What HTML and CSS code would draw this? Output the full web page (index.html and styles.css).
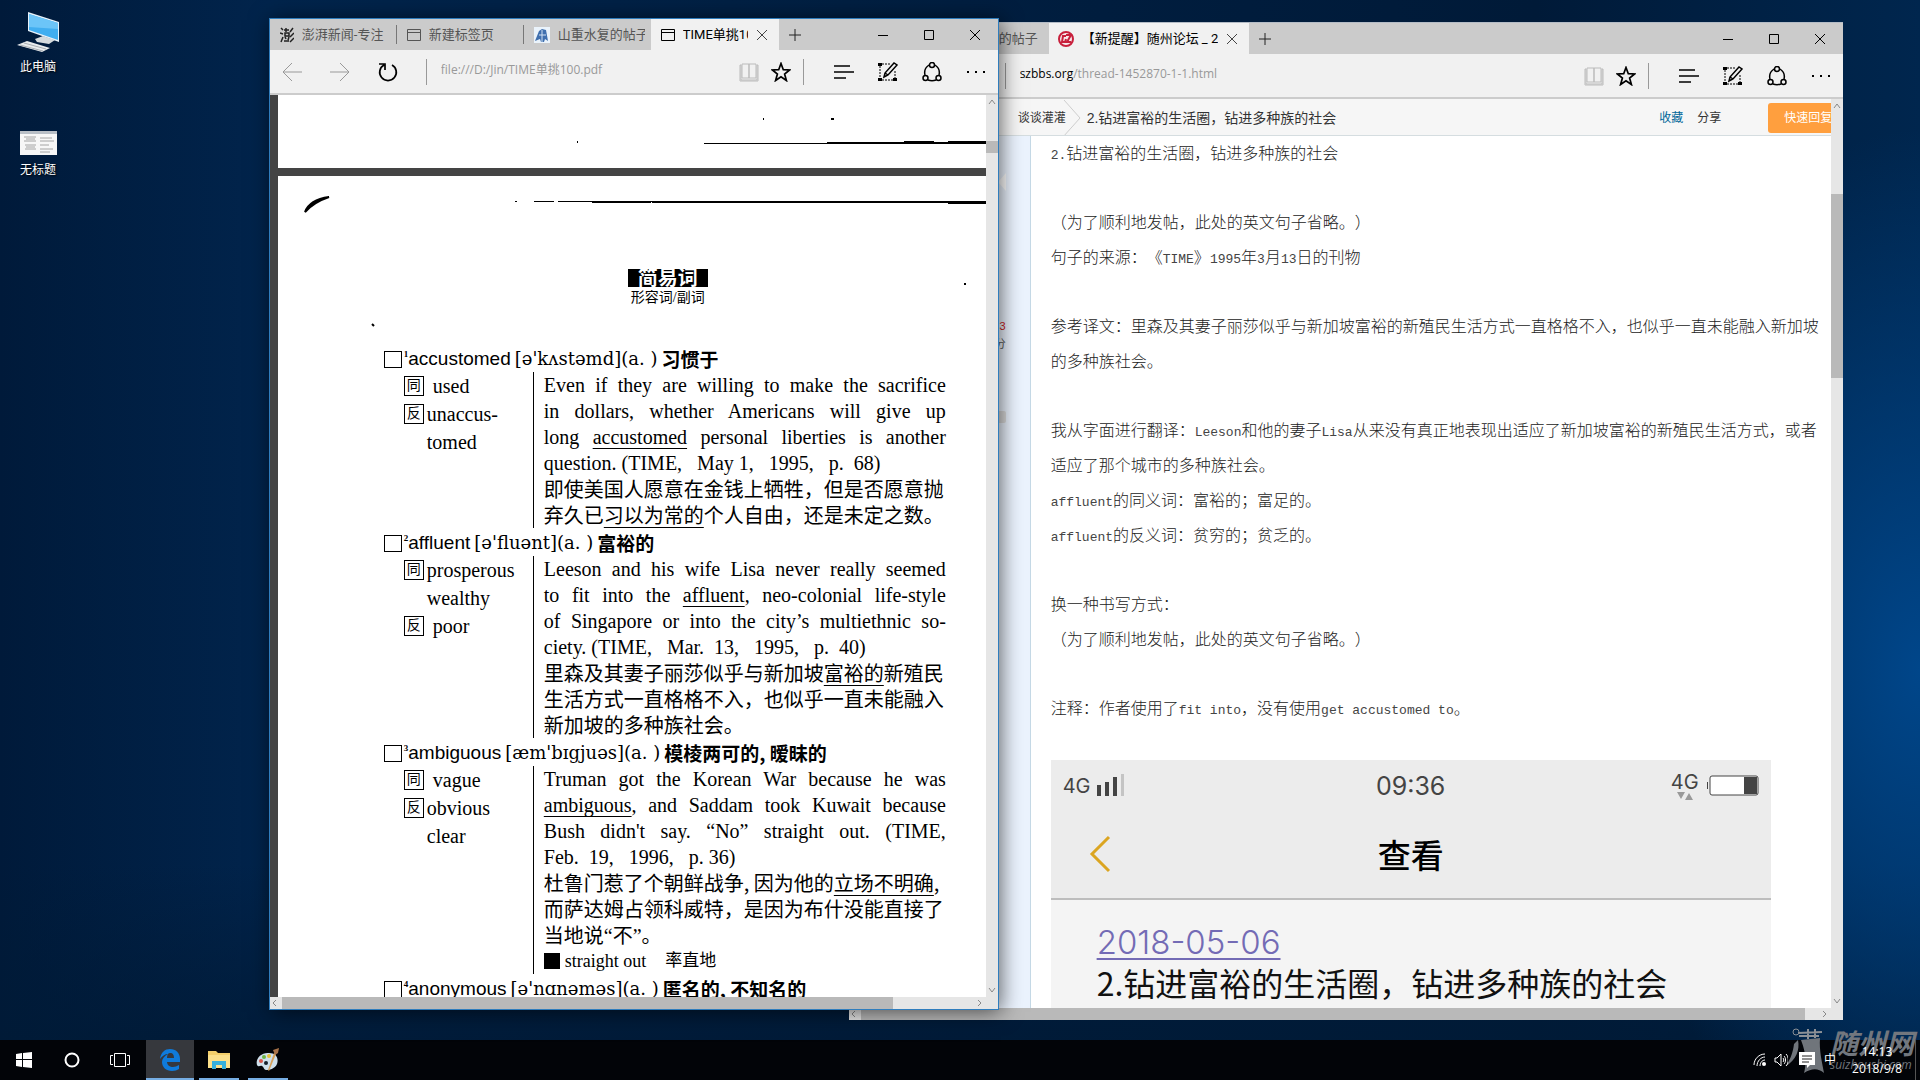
FILE: index.html
```html
<!DOCTYPE html>
<html lang="zh-CN">
<head>
<meta charset="utf-8">
<title>桌面</title>
<link rel="stylesheet" href="styles.css">
</head>
<body>
<svg class="sprite" aria-hidden="true">
  <symbol id="i-back" viewBox="0 0 20 20"><path d="M20 10H1M10 1 1 10l9 9"/></symbol>
  <symbol id="i-fwd" viewBox="0 0 20 20"><path d="M0 10h19M10 1l9 9-9 9"/></symbol>
  <symbol id="i-refresh" viewBox="0 0 20 20"><path d="M6 3a8.3 8.3 0 1 0 8 0M1 2h6v6" stroke-width="1.7"/></symbol>
  <symbol id="i-book" viewBox="0 0 20 20"><path d="M1 3h1v15h16V3h1v16H1zM3 2h7v14H3zM10 2h7v14h-7z"/></symbol>
  <symbol id="i-star" viewBox="0 0 20 20"><path d="m10 1.500 2.300 6.200 6.300.3-5 4 1.800 6.500-5.400-3.800-5.400 3.800 1.800-6.500-5-4 6.300-.3z" stroke-width="1.700"/></symbol>
  <symbol id="i-hub" viewBox="0 0 20 20"><path d="M0 4h16M0 10h20M0 16h12" stroke-width="1.500"/></symbol>
  <symbol id="i-note" viewBox="0 0 20 20"><path d="M2 4v13M17 9v8M4 2h8M4 18h12" stroke-dasharray="2 1"/><path d="M0 1h4v3H0zM0 16h4v3H0zM15 16h4v3h-4z" fill="currentColor" stroke="none"/><path d="m6 15 1-4L16 1l3 2-9 10zM7 11l3 2" stroke-width="1.500"/></symbol>
  <symbol id="i-share" viewBox="0 0 20 20"><path d="M7 3C4 5 2 9 3 13M13 3c3 2 5 6 4 10M6 18c3 1 5 1 8 0" stroke-width="1.500"/><circle cx="10" cy="3" r="2.500" stroke-width="1.500"/><circle cx="3.500" cy="16" r="2.500" stroke-width="1.500"/><circle cx="16.500" cy="16" r="2.500" stroke-width="1.500"/></symbol>
  <symbol id="i-more" viewBox="0 0 20 20"><path d="M1 9h2v2H1zM9 9h2v2H9zM17 9h2v2h-2z" fill="currentColor" stroke="none"/></symbol>
  <symbol id="i-page" viewBox="0 0 14 14"><path d="M.5 1.500h13v11H.5zM.5 4.500h13"/></symbol>
  <symbol id="i-x" viewBox="0 0 12 12"><path d="m1 1 10 10M11 1 1 11"/></symbol>
  <symbol id="i-plus" viewBox="0 0 12 12"><path d="M6 0v12M0 6h12"/></symbol>
  <symbol id="i-min" viewBox="0 0 12 12"><path d="M1 6.500h10"/></symbol>
  <symbol id="i-max" viewBox="0 0 12 12"><path d="M1.500 1.500h9v9h-9z"/></symbol>
  <symbol id="i-up" viewBox="0 0 10 10"><path d="m2 7 3-4 3 4"/></symbol>
  <symbol id="i-down" viewBox="0 0 10 10"><path d="m2 3 3 4 3-4"/></symbol>
  <symbol id="i-left" viewBox="0 0 10 10"><path d="M6 2 3 5l3 3"/></symbol>
  <symbol id="i-right" viewBox="0 0 10 10"><path d="m4 2 3 3-3 3"/></symbol>
</svg>

<main class="desktop">
  <nav class="shortcuts" aria-label="桌面图标">
    <a class="shortcut" href="#pc">
      <svg width="44" height="40" viewBox="0 0 44 40"><path d="m12 0 31 10v20L12 19z" fill="#e8f2fa"/><path d="m13 2 29 9v17L13 18z" fill="#41aef0"/><path d="m13 2 29 9v6L13 15z" fill="#6cc5f8"/><path d="m19 27 8-3 12 4-6 4-12-2z" fill="#d5dadd"/><path d="m1 33 10-4 23 7-8 4z" fill="#e9ecee"/><path d="m4 33 23 6M8 31l22 6" stroke="#a8adb2"/></svg>
      <span>此电脑</span>
    </a>
    <a class="shortcut" href="#untitled">
      <svg width="37" height="24" viewBox="0 0 37 24"><path d="M0 0h37v24H0z" fill="#f7f7f7"/><path d="M0 0h37v3H0z" fill="#b9bfc6"/><path d="M4 6h12M6 8h9M4 10h12M5 14h11M6 16h9M5 18h11M20 7h12M20 10h14M20 14h9M20 18h13M20 21h10" stroke="#a4a4a4"/></svg>
      <span>无标题</span>
    </a>
  </nav>

  <section class="window window-web">
    <header class="titlebar">
      <button class="tab tab-covered"><span class="tab-text">山重水复的帖子</span></button>
      <div class="tab tab-active tab-wide">
        <svg width="16" height="18" viewBox="0 0 16 18"><circle cx="8" cy="9" r="7" fill="#f7e9ec" stroke="#c8203c" stroke-width="2"/><path d="M8 6H5l-1 6h3l1-3M8 5h5l-4 7h4" stroke="#c8203c" stroke-width="2" fill="none"/></svg>
        <span class="tab-text">【新提醒】随州论坛 _ 2</span>
        <button class="tab-close" aria-label="关闭标签页"><svg class="ic ic-12"><use href="#i-x"/></svg></button>
      </div>
      <button class="tab-add" aria-label="新建标签页"><svg class="ic ic-12"><use href="#i-plus"/></svg></button>
      <div class="controls">
        <button aria-label="最小化"><svg class="ic ic-12"><use href="#i-min"/></svg></button>
        <button aria-label="最大化"><svg class="ic ic-12"><use href="#i-max"/></svg></button>
        <button aria-label="关闭"><svg class="ic ic-12"><use href="#i-x"/></svg></button>
      </div>
    </header>
    <div class="toolbar">
      <button class="nav dim" aria-label="后退"><svg class="ic ic-20"><use href="#i-back"/></svg></button>
      <button class="nav dim" aria-label="前进"><svg class="ic ic-20"><use href="#i-fwd"/></svg></button>
      <button class="nav" aria-label="刷新"><svg class="ic ic-20"><use href="#i-refresh"/></svg></button>
      <i class="rule rule-url"></i>
      <div class="url"><b>szbbs.org</b>/thread-1452870-1-1.html</div>
      <button class="small faint" aria-label="阅读视图"><svg class="ic ic-20"><use href="#i-book"/></svg></button>
      <button class="small" aria-label="收藏"><svg class="ic ic-20"><use href="#i-star"/></svg></button>
      <i class="rule rule-tools"></i>
      <button class="tool" aria-label="中心"><svg class="ic ic-20"><use href="#i-hub"/></svg></button>
      <button class="tool" aria-label="做笔记"><svg class="ic ic-20"><use href="#i-note"/></svg></button>
      <button class="tool" aria-label="共享"><svg class="ic ic-20"><use href="#i-share"/></svg></button>
      <button class="tool" aria-label="更多"><svg class="ic ic-20"><use href="#i-more"/></svg></button>
    </div>
    <div class="viewport">
      <div class="forum">
        <nav class="crumbs">
          <a class="crumb-board" href="#board">谈谈灌灌</a>
          <svg class="crumb-arrow" width="20" height="37" viewBox="0 0 20 37"><path d="M1 0 17 18 0 37" fill="none" stroke="#cdcdcd"/></svg>
          <a class="crumb-topic" href="#topic">2.钻进富裕的生活圈，钻进多种族的社会</a>
          <a class="crumb-fav" href="#fav">收藏</a>
          <a class="crumb-share" href="#share">分享</a>
          <button class="reply">快速回复</button>
        </nav>
        <div class="post">
          <aside class="author">
            <svg width="8" height="18" viewBox="0 0 8 18"><path d="M8 0v18L0 9z" fill="#fff"/></svg>
            <span class="count">3</span><span class="label">分</span>
            <i class="badge"></i>
          </aside>
          <article class="body">
            <p><span class="en">2.</span>钻进富裕的生活圈，钻进多种族的社会</p>
            <p>（为了顺利地发帖，此处的英文句子省略。）<br>句子的来源：《<span class="en">TIME</span>》<span class="en">1995</span>年<span class="en">3</span>月<span class="en">13</span>日的刊物</p>
            <p>参考译文：里森及其妻子丽莎似乎与新加坡富裕的新殖民生活方式一直格格不入，也似乎一直未能融入新加坡的多种族社会。</p>
            <p>我从字面进行翻译：<span class="en">Leeson</span>和他的妻子<span class="en">Lisa</span>从来没有真正地表现出适应了新加坡富裕的新殖民生活方式，或者适应了那个城市的多种族社会。<br><span class="en">affluent</span>的同义词：富裕的；富足的。<br><span class="en">affluent</span>的反义词：贫穷的；贫乏的。</p>
            <p>换一种书写方式：<br>（为了顺利地发帖，此处的英文句子省略。）</p>
            <p>注释：作者使用了<span class="en">fit into</span>，没有使用<span class="en">get accustomed to</span>。</p>
            <section class="phone">
              <header class="phone-head">
                <div class="phone-status">
                  <span class="net">4G<svg width="30" height="24" viewBox="0 0 30 24"><path d="M1 11h4v11H1zM9 8h4v14H9zM17 3h4v19h-4z" fill="#444"/><path d="M25 0h3v22h-3z" fill="#c4c4c4"/></svg></span>
                  <time class="clock-big">09:36</time>
                  <span class="net net-right"><span class="data">4G<svg width="20" height="8" viewBox="0 0 20 8"><path d="M2 0h8L6 7zM10 8h8l-4-7z" fill="#999"/></svg></span><svg width="52" height="22" viewBox="0 0 52 22"><rect x="3" y="1" width="48" height="19" rx="2" fill="#fff" stroke="#444"/><path d="M37 2h13v17H37zM0 7h1v7H0z" fill="#444"/></svg></span>
                </div>
                <div class="phone-nav">
                  <svg width="22" height="38" viewBox="0 0 22 38"><path d="M20 2 3 19l17 17" fill="none" stroke="#dba521" stroke-width="3"/></svg>
                  <h2>查看</h2>
                </div>
              </header>
              <div class="phone-note">
                <a href="#date">2018-05-06</a>
                <p>2.钻进富裕的生活圈，钻进多种族的社会</p>
              </div>
            </section>
          </article>
        </div>
      </div>
      <div class="vbar"><svg class="ic ic-10"><use href="#i-up"/></svg><i class="thumb-v thumb-web"></i><svg class="ic ic-10 end"><use href="#i-down"/></svg></div>
    </div>
    <div class="hbar"><svg class="ic ic-10"><use href="#i-left"/></svg><i class="thumb-h thumb-h-web"></i><svg class="ic ic-10 end"><use href="#i-right"/></svg></div>
  </section>

  <section class="window window-pdf">
    <header class="titlebar">
      <button class="tab">
        <svg width="14" height="16" viewBox="0 0 14 16"><path d="m1 1 2 2M0 6l3 1M1 15l2-5M6 1v4M4 3h5M5 6h4v3H5zM5 10l1 2M9 10l-1 3M4 14h5M13 1l-3 4M14 6l-4 4M14 11l-4 4" stroke="#222" stroke-width="1.500" fill="none"/></svg>
        <span class="tab-text">澎湃新闻-专注</span>
      </button>
      <button class="tab"><svg class="ic ic-14"><use href="#i-page"/></svg><span class="tab-text">新建标签页</span></button>
      <button class="tab tab-tight">
        <svg width="16" height="16" viewBox="0 0 16 16"><path d="M0 0h16v16H0z" fill="#eaf3fb"/><path d="m1 14 4-10 3-2 4 1 2 11-3-2-1 3H7l-1-3z" fill="#3f6fae"/><path d="M8 3v12M5 8h7" stroke="#cfe0f2"/></svg>
        <span class="tab-text">山重水复的帖子</span>
      </button>
      <div class="tab tab-active"><svg class="ic ic-14"><use href="#i-page"/></svg><span class="tab-text">TIME单挑100</span>
        <button class="tab-close" aria-label="关闭标签页"><svg class="ic ic-12"><use href="#i-x"/></svg></button></div>
      <button class="tab-add" aria-label="新建标签页"><svg class="ic ic-12"><use href="#i-plus"/></svg></button>
      <div class="controls">
        <button aria-label="最小化"><svg class="ic ic-12"><use href="#i-min"/></svg></button>
        <button aria-label="最大化"><svg class="ic ic-12"><use href="#i-max"/></svg></button>
        <button aria-label="关闭"><svg class="ic ic-12"><use href="#i-x"/></svg></button>
      </div>
    </header>
    <div class="toolbar">
      <button class="nav dim" aria-label="后退"><svg class="ic ic-20"><use href="#i-back"/></svg></button>
      <button class="nav dim" aria-label="前进"><svg class="ic ic-20"><use href="#i-fwd"/></svg></button>
      <button class="nav" aria-label="刷新"><svg class="ic ic-20"><use href="#i-refresh"/></svg></button>
      <i class="rule rule-url"></i>
      <div class="url">file:///D:/Jin/TIME单挑100.pdf</div>
      <button class="small faint" aria-label="阅读视图"><svg class="ic ic-20"><use href="#i-book"/></svg></button>
      <button class="small" aria-label="收藏"><svg class="ic ic-20"><use href="#i-star"/></svg></button>
      <i class="rule rule-tools"></i>
      <button class="tool" aria-label="中心"><svg class="ic ic-20"><use href="#i-hub"/></svg></button>
      <button class="tool" aria-label="做笔记"><svg class="ic ic-20"><use href="#i-note"/></svg></button>
      <button class="tool" aria-label="共享"><svg class="ic ic-20"><use href="#i-share"/></svg></button>
      <button class="tool" aria-label="更多"><svg class="ic ic-20"><use href="#i-more"/></svg></button>
    </div>
    <div class="viewport">
      <div class="reader">
        <div class="sheet sheet-end"><svg width="710" height="73" viewBox="0 0 710 73"><path d="M426 48.500h284" stroke="#000" stroke-width="1"/><path d="M549 48h161M626 47h30M670 47h40" stroke="#000" stroke-width="2"/><path d="M485 24h1M553 24h3M299 47h1" stroke="#000" stroke-width="2"/></svg></div>
        <article class="sheet sheet-main">
          <svg class="scan" width="710" height="220" viewBox="0 0 710 220"><path d="M27 36c3-8 10-13 24-15-9 3-17 7-24 15z" stroke="#000" stroke-width="2"/><path d="M237 25.500h2M256 25.500h20M280 25.500h430" stroke="#000"/><path d="M314 26h59M374 26h336M670 27h40" stroke="#000" stroke-width="2"/><path d="M94 148l2 2M686 108h2" stroke="#000" stroke-width="2"/></svg>
          <header class="lesson"><h1>简易词</h1><p>形容词/副词</p></header>

          <section class="entry">
            <h2><label><input type="checkbox"><sup>1</sup>accustomed</label><span class="ipa">[ə'kʌstəmd](a. )</span><b>习惯于</b></h2>
            <div class="detail">
              <ul>
                <li><mark>同</mark><span class="single">used</span></li>
                <li><mark>反</mark>unaccus-</li>
                <li class="cont">tomed</li>
              </ul>
              <div class="quote">
                <p class="full">Even if they are willing to make the sacrifice</p>
                <p class="full">in dollars, whether Americans will give up</p>
                <p class="full">long <u>accustomed</u> personal liberties is another</p>
                <p>question. (TIME,&nbsp;&nbsp; May 1,&nbsp;&nbsp; 1995,&nbsp;&nbsp; p.&nbsp; 68)</p>
                <p class="zh">即使美国人愿意在金钱上牺牲，但是否愿意抛</p>
                <p class="zh">弃久已<u>习以为常的</u>个人自由，还是未定之数。</p>
              </div>
            </div>
          </section>

          <section class="entry">
            <h2><label><input type="checkbox"><sup>2</sup>affluent</label><span class="ipa">[ə'fluənt](a. )</span><b>富裕的</b></h2>
            <div class="detail">
              <ul>
                <li><mark>同</mark>prosperous</li>
                <li class="cont">wealthy</li>
                <li><mark>反</mark><span class="single">poor</span></li>
              </ul>
              <div class="quote">
                <p class="full">Leeson and his wife Lisa never really seemed</p>
                <p class="full">to fit into the <u>affluent</u>, neo-colonial life-style</p>
                <p class="full">of Singapore or into the city’s multiethnic so-</p>
                <p>ciety. (TIME,&nbsp;&nbsp; Mar.&nbsp; 13,&nbsp;&nbsp; 1995,&nbsp;&nbsp; p.&nbsp; 40)</p>
                <p class="zh">里森及其妻子丽莎似乎与新加坡<u>富裕的</u>新殖民</p>
                <p class="zh">生活方式一直格格不入，也似乎一直未能融入</p>
                <p class="zh">新加坡的多种族社会。</p>
              </div>
            </div>
          </section>

          <section class="entry">
            <h2><label><input type="checkbox"><sup>3</sup>ambiguous</label><span class="ipa">[æm'bɪgjuəs](a. )</span><b>模棱两可的, 暧昧的</b></h2>
            <div class="detail">
              <ul>
                <li><mark>同</mark><span class="single">vague</span></li>
                <li><mark>反</mark>obvious</li>
                <li class="cont">clear</li>
              </ul>
              <div class="quote">
                <p class="full">Truman got the Korean War because he was</p>
                <p class="full"><u>ambiguous</u>, and Saddam took Kuwait because</p>
                <p class="full">Bush didn't say. “No” straight out. (TIME,</p>
                <p>Feb.&nbsp; 19,&nbsp;&nbsp; 1996,&nbsp;&nbsp; p. 36)</p>
                <p class="zh">杜鲁门惹了个朝鲜战争, 因为他的<u>立场不明确</u>,</p>
                <p class="zh">而萨达姆占领科威特，是因为布什没能直接了</p>
                <p class="zh">当地说<span class="q">“</span>不<span class="q">”</span>。</p>
                <p class="idiom"><i></i>straight out<span>率直地</span></p>
              </div>
            </div>
          </section>

          <section class="entry">
            <h2><label><input type="checkbox"><sup>4</sup>anonymous</label><span class="ipa">[ə'nɑnəməs](a. )</span><b>匿名的, 不知名的</b></h2>
          </section>
        </article>
      </div>
      <div class="vbar"><svg class="ic ic-10"><use href="#i-up"/></svg><i class="thumb-v thumb-pdf"></i><svg class="ic ic-10 end"><use href="#i-down"/></svg></div>
    </div>
    <div class="hbar"><svg class="ic ic-10"><use href="#i-left"/></svg><i class="thumb-h thumb-h-pdf"></i><svg class="ic ic-10 end"><use href="#i-right"/></svg></div>
  </section>
</main>

<footer class="taskbar">
  <div class="apps">
    <button aria-label="开始"><svg width="16" height="16" viewBox="0 0 16 16"><path d="m0 2 6-1v6H0zM7 1l9-1v7H7zM0 8h6v7l-6-1zM7 8h9v8l-9-1z" fill="#fff"/></svg></button>
    <button aria-label="Cortana"><svg width="16" height="16" viewBox="0 0 16 16"><circle cx="8" cy="8" r="6.500" fill="none" stroke="#fff" stroke-width="2"/></svg></button>
    <button aria-label="任务视图"><svg width="20" height="16" viewBox="0 0 20 16"><path d="M4.500 1.500h11v13h-11zM3 3.500H.5v9H3M17 3.500h2.500v9H17" fill="none" stroke="#fff"/></svg></button>
  </div>
  <div class="apps apps-open">
    <button class="current" aria-label="Microsoft Edge"><svg width="20" height="22" viewBox="0 0 20 22"><path d="M0 10C1 3 5 0 10 0c6 0 10 4 10 10v3H7c0 3 3 5 6 5 2 0 4-1 6-2v4c-2 1-4 2-7 2-6 0-10-4-10-9 0-3 2-6 6-8-3 0-6 2-8 5zm7-1h7c0-3-1-5-4-5-2 0-3 2-3 5z" fill="#0f7bdb"/></svg></button>
    <button aria-label="文件资源管理器"><svg width="22" height="20" viewBox="0 0 22 20"><path d="M0 1h8l2 2h12v15H0z" fill="#f3cf6b"/><path d="M0 5h22v13H0z" fill="#fbe08b"/><path d="M4 11h14v8h-4v-4H8v4H4z" fill="#35b0dd"/></svg></button>
    <button aria-label="画图"><svg width="24" height="24" viewBox="0 0 24 24"><path d="M1 17c-2-7 5-13 12-12 7 0 10 5 8 11-2 5-8 6-11 6-2 0-2-3-4-4s-3 2-5-1z" fill="#cfe0ec"/><circle cx="5" cy="13" r="2" fill="#d9564a"/><circle cx="8" cy="9" r="2" fill="#6eb544"/><circle cx="13" cy="8" r="2" fill="#e7c13a"/><circle cx="10" cy="15" r="2" fill="#14202b"/><path d="m18 5 2 1-7 17-1-1z" fill="#d8a15a"/><path d="m17 2 6-2-1 5-3 2z" fill="#a87248"/></svg></button>
  </div>
  <div class="tray">
    <svg class="tray-wifi" width="13" height="14" viewBox="0 0 13 14"><path d="M1 12C1 6 6 1 12 1M4 13c0-5 4-9 8-9M7 13c0-3 2-6 5-6" fill="none" stroke="#fff"/><circle cx="11" cy="11" r="2" fill="#fff"/></svg>
    <svg class="tray-vol" width="14" height="14" viewBox="0 0 14 14"><path d="M1 5h2l4-4v12L3 9H1zM9 5c1 1 1 3 0 4M10 3c2 2 2 6 0 8M12 1c3 3 3 9 0 12" fill="none" stroke="#fff"/></svg>
    <svg class="tray-msg" width="16" height="16" viewBox="0 0 16 16"><path d="M0 0h16v13h-5l-3 3v-3H0z" fill="#fff"/><path d="M3 4h10M3 7h10M3 10h7" stroke="#222"/></svg>
    <span class="ime">中</span>
    <div class="clock"><time>14:13</time><time>2018/9/8</time></div>
    <i class="peek"></i>
  </div>
</footer>
<div class="watermark" aria-hidden="true">
  <svg width="46" height="46" viewBox="0 0 46 46"><path d="M14 5l24-1M15 8h20M24 1v10M31 1v9" stroke="#8b9096" stroke-width="2"/><circle cx="12" cy="4" r="3" fill="none" stroke="#8b9096"/><path d="m17 12 19-2c-1 12 2 24 4 35-6-5-12-5-20 0 2-7 3-18-3-33zM14 12c2 10-2 20-12 26 5-8 7-14 8-22z" fill="#70757b"/></svg>
  <div class="wm-text"><b>随州网</b><span>suizhoushi.com</span></div>
</div>
</body>
</html>
```
FILE: styles.css
```css
* { box-sizing: border-box; }
body, h1, h2, p, ul { margin: 0; padding: 0; }
ul { list-style: none; }
button { margin: 0; padding: 0; border: 0; background: none; color: inherit; font: inherit; }
a { color: inherit; text-decoration: none; }
svg { flex: none; }

body {
  display: flex;
  flex-direction: column;
  height: 100vh;
  overflow: hidden;
  font: 13px/20px "Open Sans", "Noto Sans CJK SC", sans-serif;
  background:
    radial-gradient(ellipse 16% 50% at 100% 62%, #00468a 0%, #00468a00 100%),
    linear-gradient(#00183400 80%, #001a36 100%),
    linear-gradient(90deg, #001a3a 0%, #01244c 14%, #001e40 50%, #001a38 80%, #00264e 100%);
}
.sprite { display: none; }
.ic { display: block; fill: none; stroke: currentColor; }
.ic-10 { width: 10px; height: 10px; }
.ic-12 { width: 12px; height: 12px; }
.ic-14 { width: 14px; height: 14px; }
.ic-20 { width: 20px; height: 20px; }

.desktop { position: relative; flex: 1; min-height: 0; }
.shortcuts { display: flex; flex-direction: column; gap: 55px; width: 76px; padding-top: 12px; }
.shortcut {
  display: flex; flex-direction: column; align-items: center; gap: 6px;
  color: #fff; font-size: 12px; line-height: 18px; text-shadow: 1px 1px 2px #000;
}

/* browser windows */
.window {
  position: absolute;
  display: flex;
  flex-direction: column;
  overflow: hidden;
  background: #f1f1f1;
  color: #000;
}
.window-web { top: 22px; right: 4%; bottom: 20px; left: 44.2%; border-top: 1px solid #b4bcc6; }
.window-pdf { top: 18px; bottom: 30px; left: 14%; width: 38%; min-width: 730px; border: 1px solid #2f7dbd; box-shadow: 2px 2px 20px #0009; }
.titlebar { display: flex; flex: none; height: 31px; background: #cbcbcb; font-family: Roboto, "Noto Sans CJK SC", sans-serif; }
.tab {
  position: relative;
  display: flex; align-items: center; gap: 8px;
  flex: none; width: 127px; padding: 0 10px;
  color: #555; text-align: left;
}
.tab:not(.tab-active)::after { content: ""; position: absolute; right: 0; top: 6px; width: 1px; height: 19px; background: #777; }
.tab-text { flex: 1; overflow: hidden; white-space: nowrap; }
.tab-tight { padding-right: 6px; }
.tab.tab-tight::after { display: none; }
.tab-active { width: 128px; padding-right: 5px; background: #f1f1f1; color: #000; }
.tab-wide { width: 200px; padding-left: 9px; }
.tab-covered { width: 200px; padding-left: 98px; }
.tab.tab-covered::after { display: none; }
.tab-close { display: grid; place-items: center; width: 24px; height: 24px; margin-left: -6px; color: #444; }
.tab-add { display: grid; place-items: center; width: 32px; color: #222; }
.controls { display: flex; margin-left: auto; }
.controls button { display: grid; place-items: center; width: 46px; }

.toolbar { display: flex; align-items: center; flex: none; height: 45px; border-bottom: 2px solid #ccc; }
.toolbar button { display: grid; place-items: center; height: 32px; }
.nav { width: 44px; margin-right: 4px; }
.small { width: 32px; }
.tool { width: 44px; }
.toolbar .dim { color: #999; }
.toolbar .faint { color: #bbb; }
.rule { width: 1px; height: 26px; background: #999; }
.rule-url { margin: 0 14px 0 12px; }
.rule-tools { margin: 0 18px 0 6px; }
.url { flex: 1; overflow: hidden; white-space: nowrap; color: #999; padding-bottom: 4px; font-size: 12px; }
.url b { color: #000; font-weight: 400; }

.viewport { display: flex; flex: 1; min-height: 0; }
.vbar { display: flex; flex-direction: column; align-items: center; flex: none; width: 12px; padding: 2px 0; background: #e6e6e6; color: #888; }
.hbar { display: flex; align-items: center; flex: none; height: 12px; background: #e6e6e6; color: #888; }
.end { margin-top: auto; }
.hbar .end { margin: 0 14px 0 auto; }
.thumb-v { width: 12px; background: #b9b9b9; }
.thumb-h { height: 12px; background: #b9b9b9; margin-left: 2px; }
.thumb-pdf { height: 12px; margin-top: 34px; }
.thumb-web { height: 184px; margin-top: 83px; }
.thumb-h-pdf { width: 84%; }
.thumb-h-web { width: 95%; }

/* scanned dictionary */
.reader { flex: 1; min-width: 0; display: flex; flex-direction: column; gap: 8px; overflow: hidden; padding-left: 8px; background: #444; }
.sheet { flex: none; overflow: hidden; background: #fff; }
.sheet-end { height: 73px; }
.sheet-main { position: relative; flex: 1; padding: 93px 0 0 106px; font-family: "Liberation Serif", "Noto Sans CJK SC", serif; font-size: 20px; line-height: 26px; text-spacing-trim: space-all; }
.scan { position: absolute; left: 0; top: 0; }
.lesson { width: 80px; margin: 0 0 37px 244px; text-align: center; white-space: nowrap; }
.lesson h1 { background: #000; color: #fff; font-size: 20px; line-height: 18px; }
.lesson p { font-size: 14px; line-height: 22px; }
.entry { margin-bottom: 2px; white-space: nowrap; }
.entry h2 { display: flex; align-items: center; height: 26px; font-size: 20px; font-weight: 400; }
.entry label { display: flex; align-items: center; font-family: "Liberation Sans", sans-serif; font-size: 19px; }
.entry input { appearance: none; width: 18px; height: 17px; margin: 0 2px 0 0; border: 1px solid #000; background: #fff; }
.entry sup { font: 700 9px/10px "Liberation Serif", serif; align-self: flex-start; padding-top: 3px; }
.ipa { padding: 0 4px; font-family: "DejaVu Serif", serif; font-size: 18px; }
.entry h2 b { font-family: "Noto Sans CJK SC", sans-serif; font-size: 19px; }
.detail { display: grid; grid-template-columns: 149px 413px; }
.detail ul { padding-left: 20px; line-height: 28px; }
.detail li { display: flex; align-items: center; gap: 3px; height: 28px; }
.detail .cont { padding-left: 23px; }
.single { padding-left: 6px; }
mark { width: 20px; height: 20px; border: 1px solid #000; background: none; font-size: 14px; line-height: 18px; text-align: center; }
.quote { padding-left: 10px; border-left: 1px solid #000; }
.quote p { height: 26px; }
.quote .full { text-align: justify; text-align-last: justify; }
.quote u { text-underline-offset: 4px; text-decoration-thickness: 1px; }
.zh { font-family: "Noto Sans CJK SC", sans-serif; }
.q { font-family: "Liberation Serif", serif; }
.quote .idiom { display: flex; align-items: center; gap: 5px; font-size: 18px; }
.idiom i { width: 16px; height: 16px; background: #000; }
.idiom span { padding-left: 14px; font-size: 17px; }

/* forum thread */
.forum { flex: 1; min-width: 0; display: flex; flex-direction: column; overflow: hidden; background: #fff; font-family: "Liberation Sans", "Noto Sans CJK SC", sans-serif; text-spacing-trim: space-all; }
.crumbs { display: flex; align-items: center; flex: none; height: 37px; padding: 2px 0 0 169px; background: #f6f6f6; border-bottom: 1px solid #d5dde0; color: #333; white-space: nowrap; overflow: hidden; }
.crumb-board, .crumb-fav, .crumb-share { font-size: 12px; }
.crumb-arrow { margin: 0 4px 0 -3px; }
.crumb-topic { flex: 1; font-size: 14px; }
.crumb-fav { color: #069; margin-right: 14px; }
.crumb-share { margin-right: 47px; }
.reply { flex: none; width: 80px; height: 30px; margin-right: -17px; border-radius: 3px; background: #ff9f3e; color: #fff; font-size: 12px; }
.post { display: flex; flex: 1; min-height: 0; }
.author { display: flex; flex-direction: column; align-items: flex-end; flex: none; width: 182px; padding: 37px 24px 0 0; border-right: 1px solid #c5d9e6; background: #ebf3fe; font-size: 11px; line-height: 18px; }
.count { margin-top: 126px; color: #c22; }
.label { color: #555; }
.badge { width: 80px; height: 12px; margin-top: 58px; border-radius: 2px; background: #dcdcdc; }
.body { flex: 1; min-width: 0; padding: 0 8px 0 20px; overflow: hidden; color: #222; font-size: 16px; line-height: 35px; }
.body > p { margin-bottom: 34px; font-weight: 300; }
.en { font-family: "Liberation Mono", monospace; font-size: 13px; line-height: 20px; color: #444; }
.phone { max-width: 720px; font-family: "Noto Sans CJK SC", sans-serif; }
.phone-head { height: 140px; background: #ececec; border-bottom: 2px solid #bdbdbd; }
.phone-status { display: grid; grid-template-columns: 1fr auto 1fr; align-items: center; height: 52px; padding: 0 12px; color: #444; font-family: Inter, sans-serif; font-size: 20px; line-height: 20px; }
.net { display: flex; align-items: center; gap: 6px; }
.net-right { justify-content: flex-end; gap: 8px; }
.data { display: flex; flex-direction: column; align-items: center; }
.clock-big { font-size: 25px; line-height: 30px; }
.phone-nav { display: grid; grid-template-columns: 1fr auto 1fr; align-items: center; height: 84px; padding-left: 38px; padding-right: 38px; }
.phone-nav h2 { color: #000; font-size: 33px; line-height: 40px; font-weight: 500; }
.phone-note { padding: 22px 46px 12px; background: #f4f4f4; color: #111; font-size: 32px; line-height: 40px; white-space: nowrap; }
.phone-note a { display: block; width: max-content; color: #736bb5; font-family: Inter, sans-serif; font-size: 33px; font-weight: 300; text-decoration: underline; text-decoration-thickness: 2px; text-underline-offset: 4px; }

/* taskbar */
.taskbar { display: flex; flex: none; height: 40px; background: #020408; color: #fff; }
.apps { display: flex; }
.apps button { display: grid; place-items: center; width: 48px; }
.apps-open { gap: 1px; padding-left: 2px; }
.apps-open button { background: linear-gradient(#76aee4, #76aee4) bottom / 40px 2px no-repeat; }
.apps-open .current { background: linear-gradient(#76aee4, #76aee4) bottom / 48px 2px no-repeat #36383d; }
.tray { display: flex; align-items: center; margin-left: auto; z-index: 1; }
.tray-vol { margin-left: 8px; }
.tray-msg { margin-left: 11px; }
.ime { margin-left: 9px; font-size: 12px; }
.clock { display: flex; flex-direction: column; align-items: center; margin: 0 13px 0 16px; font-size: 12px; line-height: 17px; }
.peek { width: 1px; height: 40px; margin-right: 4px; background: #555; }
.watermark { position: absolute; right: 6px; bottom: 6px; display: flex; color: #72777e; }
.wm-text { display: flex; flex-direction: column; }
.wm-text b { font-size: 28px; line-height: 30px; font-style: italic; }
.wm-text span { font-size: 12px; line-height: 14px; font-style: italic; }
```
